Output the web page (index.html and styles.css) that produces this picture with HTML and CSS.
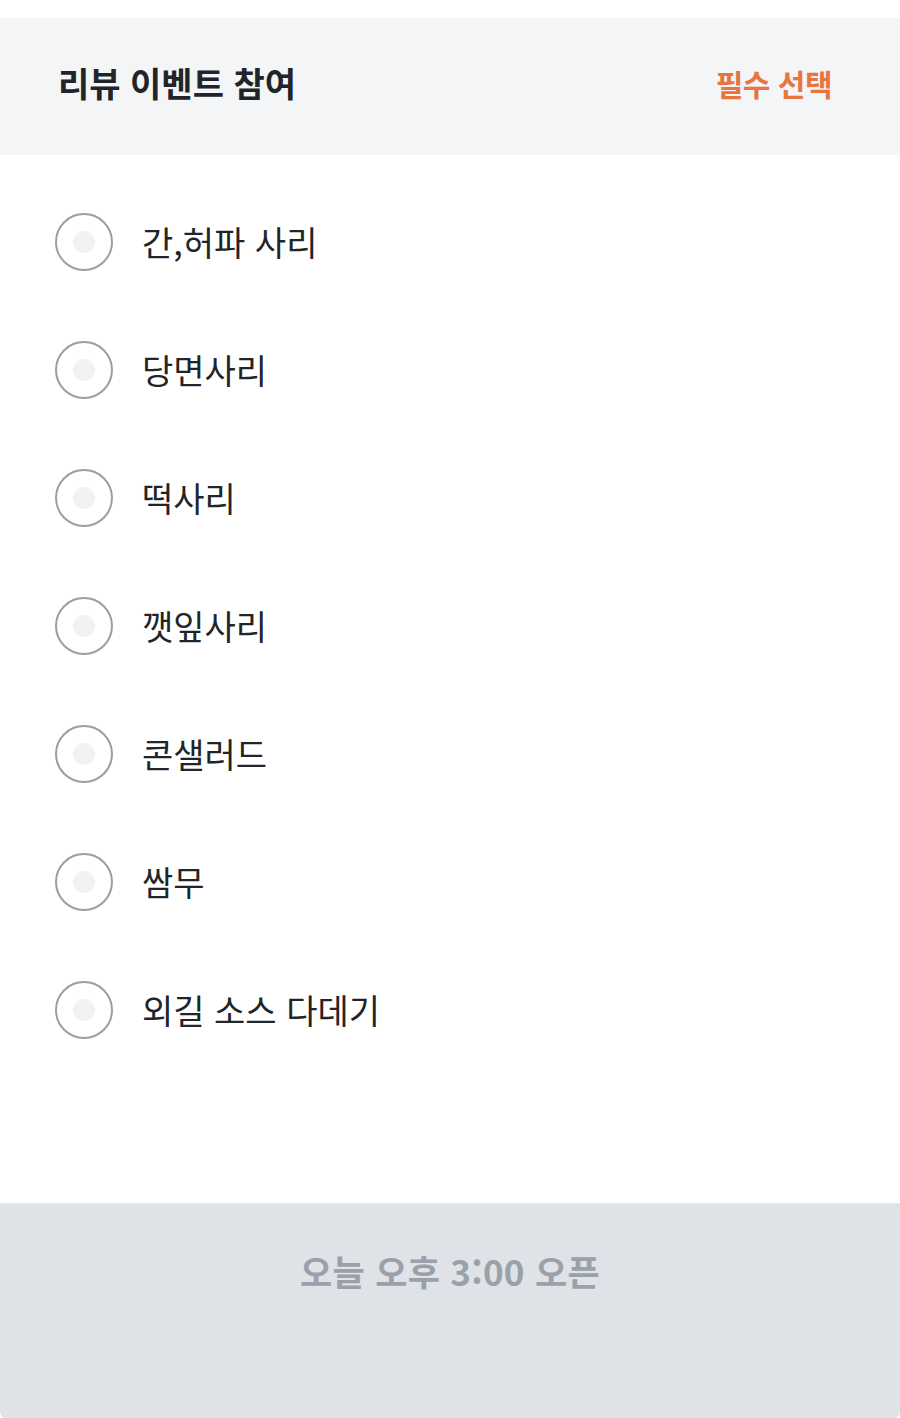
FILE: index.html
```html
<!DOCTYPE html>
<html lang="ko">
<head>
<meta charset="utf-8">
<title>리뷰 이벤트 참여</title>
<link rel="stylesheet" href="styles.css">
</head>
<body>
<div class="page">
  <header class="head">
    <h1 class="title">리뷰 이벤트 참여</h1>
    <span class="req">필수 선택</span>
  </header>
  <ul class="list">
    <li class="item"><span class="radio"><span class="dot"></span></span><span class="label">간,허파 사리</span></li>
    <li class="item"><span class="radio"><span class="dot"></span></span><span class="label">당면사리</span></li>
    <li class="item"><span class="radio"><span class="dot"></span></span><span class="label">떡사리</span></li>
    <li class="item"><span class="radio"><span class="dot"></span></span><span class="label">깻잎사리</span></li>
    <li class="item"><span class="radio"><span class="dot"></span></span><span class="label">콘샐러드</span></li>
    <li class="item"><span class="radio"><span class="dot"></span></span><span class="label">쌈무</span></li>
    <li class="item"><span class="radio"><span class="dot"></span></span><span class="label">외길 소스 다데기</span></li>
  </ul>
  <footer class="foot">
    <span class="open">오늘 오후 3:00 오픈</span>
  </footer>
</div>
</body>
</html>
```

FILE: styles.css
```css
* { box-sizing: border-box; }
html, body { margin: 0; padding: 0; background: #ffffff; }
body {
  font-family: "Noto Sans CJK KR", "Noto Sans", sans-serif;
  color: #212529;
}
.page {
  width: 900px;
  height: 1418px;
  padding-top: 18px;
  display: flex;
  flex-direction: column;
}
.head {
  height: 137px;
  background: #f4f5f7;
  display: flex;
  align-items: center;
  justify-content: space-between;
  padding: 0 68px 8px 58px;
}
.title {
  margin: 0;
  font-size: 34px;
  line-height: 40px;
  font-weight: 700;
  color: #212529;
}
.req {
  font-size: 30px;
  line-height: 40px;
  font-weight: 700;
  color: #e8743f;
  letter-spacing: -0.5px;
}
.list {
  list-style: none;
  margin: 0;
  padding: 23px 0 0 55px;
  flex: 1;
}
.item {
  height: 128px;
  display: flex;
  align-items: center;
  gap: 29px;
}
.radio {
  width: 58px;
  height: 58px;
  border: 2px solid #999fa7;
  border-radius: 50%;
  display: flex;
  align-items: center;
  justify-content: center;
  flex-shrink: 0;
}
.dot {
  width: 22px;
  height: 22px;
  border-radius: 50%;
  background: #f0f2f4;
}
.label {
  font-size: 34px;
  line-height: 40px;
  font-weight: 400;
  color: #212529;
}
.foot {
  height: 215px;
  background: #dfe2e7;
  border-top: 1px solid #e6e8ec;
  border-radius: 0 0 6px 6px;
  display: flex;
  justify-content: center;
  padding-top: 47px;
}
.open {
  font-size: 35px;
  line-height: 40px;
  height: 40px;
  font-weight: 700;
  color: #9aa1ab;
  letter-spacing: 0.3px;
}
```
